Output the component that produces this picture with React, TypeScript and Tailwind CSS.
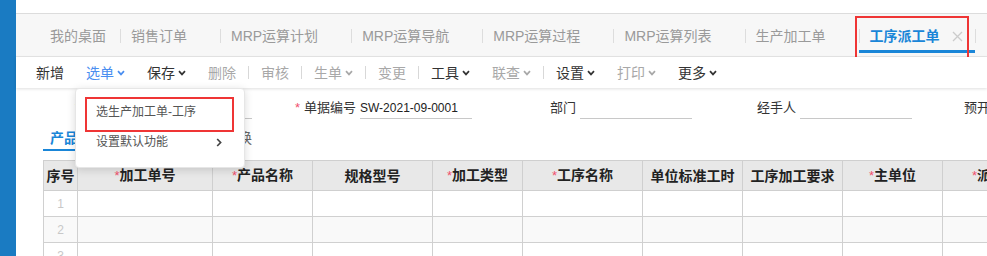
import React from "react";

const FONT = "font-['Liberation_Sans','Noto_Sans_CJK_SC',sans-serif]";

function ChevronDown() {
  return (
    <svg width="8" height="6" viewBox="0 0 8 6" className="ml-[3px]">
      <path d="M1 1.2 L4 4.4 L7 1.2" stroke="currentColor" strokeWidth="1.7" fill="none" />
    </svg>
  );
}

const pageTabs = ["销售订单", "MRP运算计划", "MRP运算导航", "MRP运算过程", "MRP运算列表", "生产加工单"];

type Tool = { t: string; c: "dark" | "gray" | "blue"; dd?: boolean } | "|";
const tools: Tool[] = [
  { t: "新增", c: "dark" },
  { t: "选单", c: "blue", dd: true },
  { t: "保存", c: "dark", dd: true },
  { t: "删除", c: "gray" },
  "|",
  { t: "审核", c: "gray" },
  "|",
  { t: "生单", c: "gray", dd: true },
  "|",
  { t: "变更", c: "gray" },
  "|",
  { t: "工具", c: "dark", dd: true },
  { t: "联查", c: "gray", dd: true },
  "|",
  { t: "设置", c: "dark", dd: true },
  { t: "打印", c: "gray", dd: true },
  { t: "更多", c: "dark", dd: true },
];

const colorCls = {
  dark: "text-[#333333]",
  gray: "text-[#a8a8a8]",
  blue: "text-[#4a8ef0]",
};

const cols: { t: string; w: number; req?: boolean }[] = [
  { t: "序号", w: 34 },
  { t: "加工单号", w: 135, req: true },
  { t: "产品名称", w: 100, req: true },
  { t: "规格型号", w: 120 },
  { t: "加工类型", w: 90, req: true },
  { t: "工序名称", w: 120, req: true },
  { t: "单位标准工时", w: 100 },
  { t: "工序加工要求", w: 100 },
  { t: "主单位", w: 100, req: true },
  { t: "派工数量", w: 120, req: true },
];

function Field({ label, req, value }: { label: string; req?: boolean; value?: string }) {
  return (
    <div className="flex w-[220px] shrink-0 items-center">
      <div className="w-[108px] shrink-0 pr-[4px] text-right text-[13px] leading-[20px] text-[#333]">
        {req && <span className="mr-[4px] text-[#f0506e]">*</span>}
        {label}
      </div>
      <div className="h-[22px] w-[112px] shrink-0 border-b border-[#c8c8c8] pt-[1px] text-[12px] leading-[20px] text-[#222]">
        {value}
      </div>
    </div>
  );
}

export default function App() {
  return (
    <div className={`flex h-[256px] w-[987px] overflow-hidden bg-white ${FONT}`}>
      <div className="w-4 shrink-0 bg-[#1a7bc2]" />
      <div className="relative flex min-w-0 flex-1 flex-col">
        {/* top strip */}
        <div className="h-[14px] shrink-0 border-b border-[#dcdcdc] bg-white" />
        {/* page tabs */}
        <div className="flex h-[43px] shrink-0 items-center border-b border-[#e6e6e6] bg-[#f7f7f7] pl-[23px] pt-[2px] text-[14px] leading-[20px]">
          <div className="pl-[11px] pr-[14px] text-[#9a9a9a]">我的桌面</div>
          {pageTabs.map((t) => (
            <React.Fragment key={t}>
              <div className="h-[14px] w-px bg-[#dddddd]" />
              <div className="pl-[10px] pr-[33px] text-[#9a9a9a]">{t}</div>
            </React.Fragment>
          ))}
          <div className="h-[14px] w-px bg-[#dddddd]" />
          <div className="relative flex items-center pl-[10px] pr-[12px]">
            <span className="font-bold text-[#1a86d8]">工序派工单</span>
            <svg width="11" height="11" viewBox="0 0 11 11" className="ml-[12px]">
              <path d="M1 1L10 10M10 1L1 10" stroke="#cccccc" strokeWidth="1.3" />
            </svg>
            <span className="absolute left-[-1px] right-0 top-[24px] h-[3px] bg-[#1a86d8]" />
          </div>
          <div className="h-[14px] w-px bg-[#dddddd]" />
        </div>
        {/* toolbar */}
        <div className="relative z-10 flex h-[31px] shrink-0 items-center gap-[22px] bg-white pl-[20px] text-[14px] leading-[20px] shadow-[0_1px_3px_rgba(0,0,0,0.13)]">
          {tools.map((it, i) =>
            it === "|" ? (
              <div key={i} className="mx-[-10px] h-[13px] w-px bg-[#d8d8d8]" />
            ) : (
              <div key={i} className={`flex items-center ${colorCls[it.c]}`}>
                <span>{it.t}</span>
                {it.dd && <ChevronDown />}
              </div>
            )
          )}
        </div>
        {/* form */}
        <div className="mt-[9px] flex pl-[16px]">
          <Field label="单据日期" req value="" />
          <Field label="单据编号" req value="SW-2021-09-0001" />
          <Field label="部门" />
          <Field label="经手人" />
          <Field label="预开工日" />
        </div>
        {/* detail tabs */}
        <div className="mt-[9px] flex gap-[76px] pl-[27px] text-[14px] leading-[20px]">
          <div className="border-b-[2px] border-[#1a86d8] px-[7px] pb-[1px] font-bold text-[#1a86d8]">产品明细</div>
          <div className="px-[7px] text-[#666]">物料替换</div>
        </div>
        {/* table */}
        <div className="mt-[9px] pl-[27px]">
          <table className="w-[1019px] table-fixed border-collapse">
            <colgroup>
              {cols.map((c) => (
                <col key={c.t} style={{ width: c.w }} />
              ))}
            </colgroup>
            <thead>
              <tr className="h-[30px] bg-[#e8e8e8]">
                {cols.map((c) => (
                  <th key={c.t} className="border border-[#cfcfcf] p-0 text-center text-[14px] font-bold leading-[20px] text-[#222]">
                    {c.req && <span className="text-[13px] font-normal text-[#f0506e]">*</span>}
                    {c.t}
                  </th>
                ))}
              </tr>
            </thead>
            <tbody>
              {[1, 2, 3].map((r) => (
                <tr key={r} className={`h-[26px] ${r === 2 ? "bg-[#f9f9f9]" : "bg-white"}`}>
                  {cols.map((c, i) => (
                    <td key={c.t} className="border border-[#d0d0d0] p-0 text-center text-[12px] text-[#c8c8c8]">
                      {i === 0 ? r : ""}
                    </td>
                  ))}
                </tr>
              ))}
            </tbody>
          </table>
        </div>

        {/* active tab highlight box */}
        <div className="absolute left-[839px] top-[16px] h-[51px] w-[114px] border-2 border-[#ef3535]" />

        {/* dropdown menu */}
        <div className="absolute left-[59px] top-[88px] z-20 h-[80px] w-[170px] rounded-[4px] border border-[#e6e6e6] bg-white pt-[8px] text-[12px] leading-[18px] text-[#555] shadow-[0_2px_8px_rgba(0,0,0,0.15)]">
          <div className="flex h-[30px] items-center pl-[20px]">选生产加工单-工序</div>
          <div className="flex h-[30px] items-center justify-between pl-[20px] pr-[22px]">
            <span>设置默认功能</span>
            <svg width="6" height="9" viewBox="0 0 6 9">
              <path d="M1.2 1 L4.6 4.5 L1.2 8" stroke="#444" strokeWidth="1.7" fill="none" />
            </svg>
          </div>
          <div className="absolute left-[9px] top-[8px] h-[35px] w-[149px] border-2 border-[#ef3535]" />
        </div>
      </div>
    </div>
  );
}
